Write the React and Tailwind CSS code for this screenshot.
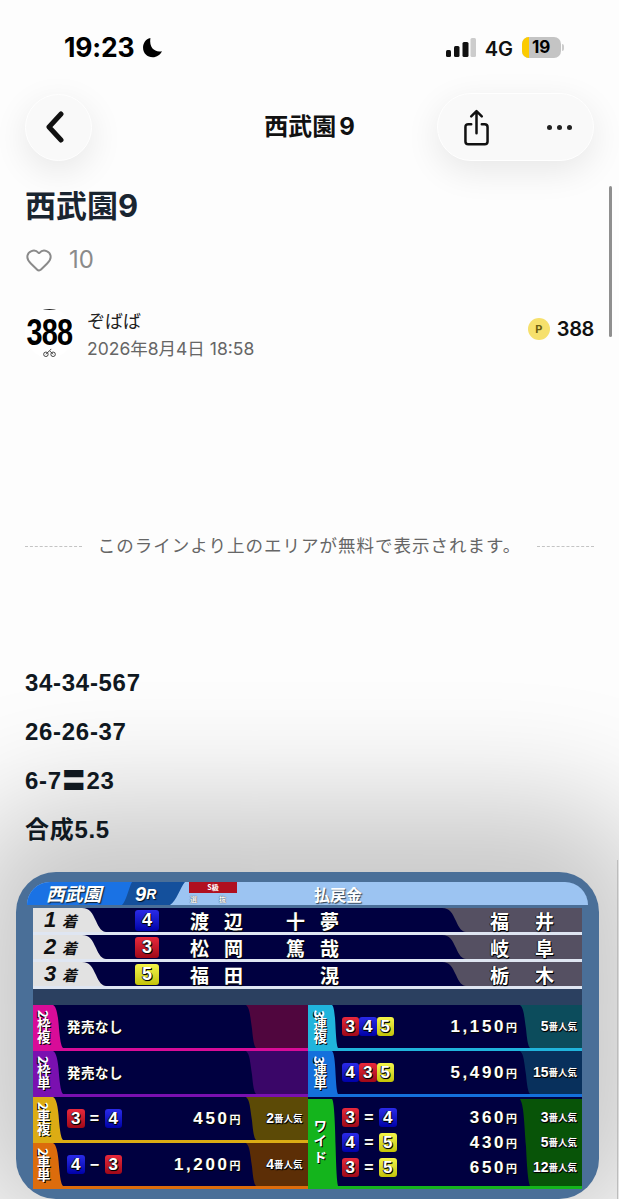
import React from "react";
import { Heart } from "lucide-react";

const INTER = "[font-family:Inter,'Noto_Sans_CJK_JP',sans-serif]";
const ARIAL = "[font-family:'Liberation_Sans','Noto_Sans_CJK_JP',sans-serif]";
const CJK = "[font-family:'Noto_Sans_CJK_JP',sans-serif]";
const OUT = "[text-shadow:1px_1px_0_#000,-1px_0_0_#222,0_1px_1px_#000]";

const Curve = ({ fill, w, flip }) => (
  <svg viewBox="0 0 10 100" preserveAspectRatio="none" className="h-full shrink-0" style={{ width: w }}>
    {flip ? (
      <path d="M0 0 C4 8 4 25 6 55 C7 80 8 95 10 100 L10 0 Z" fill={fill} />
    ) : (
      <path d="M0 0 C3 2 5 20 6 55 C7 80 8 95 10 100 L0 100 Z" fill={fill} />
    )}
  </svg>
);

const Wave = ({ fill, flip }) => (
  <svg viewBox="0 0 24 24" preserveAspectRatio="none" className="h-full w-[24px] shrink-0">
    {flip ? (
      <path d="M0 0 C8 0 10 5 14 13 C17 20 20 24 24 24 L24 0 Z" fill={fill} />
    ) : (
      <path d="M0 0 C8 0 10 5 14 13 C17 20 20 24 24 24 L0 24 Z" fill={fill} />
    )}
  </svg>
);

const badgeStyles = {
  3: "bg-gradient-to-b from-[#e8283c] to-[#a00818]",
  4: "bg-gradient-to-b from-[#2a2ae8] to-[#0000a8]",
  5: "bg-gradient-to-b from-[#f4f448] to-[#c4c400]",
};

const Badge = ({ n, big }) => (
  <span
    className={`flex shrink-0 items-center justify-center rounded-[3px] font-bold text-white ${ARIAL} ${OUT} ${badgeStyles[n]} ${
      big ? "h-[21px] w-[24px] text-[18px]" : "h-[19px] w-[17.5px] text-[17px]"
    }`}
  >
    {n}
  </span>
);

const Result = ({ n, badge, chars, pref }) => (
  <div className="flex h-[27px] border-b-[3px] border-[#dfe6f2] bg-[#000040]">
    <div className={`flex w-[49px] items-center bg-[#e2e2e2] pl-[11px] font-bold italic text-[#111] ${ARIAL}`}>
      <span className="w-[18px] text-[22px] leading-none">{n}</span>
      <span className={`text-[15px] leading-none ${CJK}`}>着</span>
    </div>
    <Wave fill="#e2e2e2" />
    <div className="ml-[29px] flex items-center">
      <Badge n={badge} big />
    </div>
    <div className={`ml-[31px] flex flex-1 items-center text-[19px] leading-none font-bold text-white ${CJK} ${OUT}`}>
      <span className="w-[34px]">{chars[0]}</span>
      <span className="w-[62px]">{chars[1]}</span>
      <span className="w-[34px]">{chars[2]}</span>
      <span>{chars[3]}</span>
    </div>
    <Wave fill="#555062" flip />
    <div className={`flex w-[116px] items-center bg-[#555062] pl-[24px] text-[19px] leading-none font-bold text-white ${CJK} ${OUT}`}>
      <span className="w-[45px]">{pref[0]}</span>
      <span>{pref[1]}</span>
    </div>
  </div>
);

const Amount = ({ v }) => (
  <div className="flex h-[25px] items-center">
    <span className={`ml-auto flex items-baseline font-bold tracking-[2.6px] text-white ${ARIAL} ${OUT}`}>
      <span className="text-[17px]">{v}</span>
      <span className={`text-[11px] tracking-normal ${CJK}`}>円</span>
    </span>
  </div>
);

const Pop = ({ v }) => (
  <div className={`flex h-[25px] items-center justify-end font-bold text-white ${ARIAL} ${OUT}`}>
    <span className="text-[14px]">{v}</span>
    <span className={`text-[9.5px] ${CJK}`}>番人気</span>
  </div>
);

const Eq = ({ c = "=" }) => (
  <span className={`w-[20px] text-center text-[16px] font-bold text-white ${ARIAL} ${OUT}`}>{c}</span>
);

const Bet = ({ color, tint, label, left, amounts, pops, grow, right, track = "tracking-[-0.5px]" }) => (
  <div
    className={`flex ${grow ? "h-[92px] pt-[2px]" : "h-[46px]"} border-b-[3px] bg-[#000040]`}
    style={{ borderColor: color }}
  >
    <div
      className={`flex ${right ? "w-[24px]" : "w-[20px]"} shrink-0 items-center justify-center ${track} text-[13.5px] leading-none font-bold text-white [writing-mode:vertical-rl] ${CJK} [text-shadow:1px_1px_0_#000]`}
      style={{ background: color }}
    >
      {label}
    </div>
    <Curve fill={color} w={right ? "6px" : "10px"} />
    <div className="flex min-w-0 flex-1 flex-col justify-center pl-[4px]">{left}</div>
    <div className={`flex shrink-0 flex-col justify-center ${right ? "w-[118px] pr-[3px]" : "w-[112px] pr-[5px]"}`}>{amounts}</div>
    <Curve fill={tint} w="10px" flip />
    <div className="flex w-[52px] shrink-0 flex-col justify-center pr-[5px]" style={{ background: tint }}>
      {pops}
    </div>
  </div>
);

const Pair = ({ a, b, c }) => (
  <div className="flex h-[25px] items-center">
    <Badge n={a} />
    <Eq c={c} />
    <Badge n={b} />
  </div>
);

const Trio = ({ a, b, c }) => (
  <div className="flex h-[25px] items-center">
    <Badge n={a} />
    <Badge n={b} />
    <Badge n={c} />
  </div>
);

const None = () => (
  <span className={`text-[13.5px] font-bold tracking-[0.5px] text-white ${CJK} ${OUT}`}>発売なし</span>
);

const Board = () => (
  <div className="ml-[16px] h-[327px] w-[583px] overflow-hidden rounded-[40px] bg-[#4a6f98] pt-[10px] shadow-[0_-20px_120px_50px_rgba(0,0,0,0.21)]">
    <div className="mx-[11px] flex h-[23px] items-stretch overflow-hidden rounded-tl-[24px] rounded-tr-[24px] bg-[#9cc4f2]">
      <div className={`flex w-[95px] items-center bg-[#1a72e4] pl-[19px] text-[18.5px] leading-none font-bold text-white italic ${CJK} [text-shadow:1px_1px_1px_#123]`}>
        西武園
      </div>
      <svg viewBox="0 0 10 23" preserveAspectRatio="none" className="h-full w-[10px] shrink-0">
        <rect width="10" height="23" fill="#14509c" />
        <path d="M0 23 C4 20 7 5 10 0 L0 0 Z" fill="#1a72e4" />
      </svg>
      <div className={`flex w-[38px] items-center bg-[#14509c] pl-[3px] leading-none font-bold text-white italic ${ARIAL} [text-shadow:1px_1px_1px_#012]`}>
        <span className="text-[20px]">9</span>
        <span className="text-[14px]">R</span>
      </div>
      <svg viewBox="0 0 10 23" preserveAspectRatio="none" className="h-full w-[15px] shrink-0">
        <path d="M0 23 C4 20 7 5 10 0 L0 0 Z" fill="#14509c" />
      </svg>
      <div className="ml-[4px] flex w-[48px] flex-col">
        <div className={`flex h-[11px] items-center justify-center bg-[#b01020] text-[7px] leading-none font-bold text-white ${CJK}`}>S級</div>
        <div className={`flex justify-between px-[1px] text-[7px] leading-[12px] font-bold text-white ${CJK} [text-shadow:0_0_1px_#000]`}>
          <span>選</span>
          <span className="mr-[10px]">抜</span>
        </div>
      </div>
      <div className={`ml-[77px] flex items-center text-[16px] leading-none font-bold text-white ${CJK} [text-shadow:1px_1px_1px_#345]`}>払戻金</div>
    </div>

    <div className="mx-[17px] mt-[3px] bg-[#2b4060]">
      <Result n="1" badge={4} chars={["渡", "辺", "十", "夢"]} pref={["福", "井"]} />
      <Result n="2" badge={3} chars={["松", "岡", "篤", "哉"]} pref={["岐", "阜"]} />
      <Result n="3" badge={5} chars={["福", "田", "", "滉"]} pref={["栃", "木"]} />
      <div className="h-[16px]" />
      <div className="grid grid-cols-2">
        <div className="flex flex-col">
          <Bet color="#d80c98" tint="#50063e" label="2枠複" left={<None />} amounts={null} pops={null} />
          <Bet color="#7a10b0" tint="#3a0668" label="2枠単" left={<None />} amounts={null} pops={null} />
          <Bet color="#dcac14" tint="#5c4a06" label="2車複" left={<Pair a={3} b={4} />} amounts={<Amount v="450" />} pops={<Pop v="2" />} />
          <Bet color="#dc6c0c" tint="#5c2e06" label="2車単" left={<Pair a={4} b={3} c="−" />} amounts={<Amount v="1,200" />} pops={<Pop v="4" />} />
        </div>
        <div className="flex flex-col">
          <Bet right color="#20b4dc" tint="#0c4c5c" label="3連複" left={<Trio a={3} b={4} c={5} />} amounts={<Amount v="1,150" />} pops={<Pop v="5" />} />
          <Bet right color="#1470dc" tint="#08305c" label="3連単" left={<Trio a={4} b={3} c={5} />} amounts={<Amount v="5,490" />} pops={<Pop v="15" />} />
          <Bet
            right
            grow
            track="tracking-[2px]"
            color="#14b41c"
            tint="#085408"
            label="ワイド"
            left={
              <>
                <Pair a={3} b={4} />
                <Pair a={4} b={5} />
                <Pair a={3} b={5} />
              </>
            }
            amounts={
              <>
                <Amount v="360" />
                <Amount v="430" />
                <Amount v="650" />
              </>
            }
            pops={
              <>
                <Pop v="3" />
                <Pop v="5" />
                <Pop v="12" />
              </>
            }
          />
        </div>
      </div>
    </div>
  </div>
);

export default function App() {
  return (
    <div className={`relative h-[1199px] w-[619px] overflow-hidden bg-[#fdfdfd] ${INTER}`}>
      {/* status bar */}
      <div className="flex h-[93px] items-start justify-between pt-[37px] pl-[64px] pr-[55px]">
        <div className="flex h-[21px] items-center gap-[8px] text-black">
          <span className="text-[26.5px] font-bold tracking-[-0.2px]">19:23</span>
          <svg viewBox="0 0 20 20" className="h-[21px] w-[21px]">
            <path d="M8 1 C3.5 2 1 6 1 10.2 C1 15.5 5 19.2 10.2 19.2 C14 19.2 17.5 17 19 13.5 C13 15 6.5 11 8 1 Z" fill="#000" />
          </svg>
        </div>
        <div className="flex h-[21px] items-center">
          <svg viewBox="0 0 30 19" className="h-[19px] w-[30px]">
            <rect x="0" y="12" width="5" height="7" rx="1.5" fill="#111" />
            <rect x="8" y="8" width="5.5" height="11" rx="1.5" fill="#111" />
            <rect x="16.5" y="4" width="6" height="15" rx="1.5" fill="#111" />
            <rect x="24.5" y="0" width="5.5" height="19" rx="1.5" fill="#ccc" />
          </svg>
          <span className="mt-[2px] ml-[9px] text-[20px] font-semibold text-[#111]">4G</span>
          <div className="ml-[9px] flex h-[21px] w-[39px] items-center overflow-hidden rounded-[7px] bg-[#c4c4c4]">
            <div className="h-full w-[7px] bg-[#fccb00]" />
            <span className="ml-[3px] text-[17px] font-bold text-black">19</span>
          </div>
          <div className="ml-[1px] h-[7px] w-[2px] rounded-r-sm bg-[#ccc]" />
        </div>
      </div>

      {/* nav */}
      <div className="mx-[25px] grid h-[68px] grid-cols-[1fr_auto_1fr] items-center">
        <div className="flex h-[67px] w-[67px] items-center justify-center rounded-full border border-white bg-[#f9f9f9] shadow-[0_10px_35px_rgba(0,0,0,0.09)]">
          <svg viewBox="0 0 24 32" className="mr-[8px] h-[32px] w-[24px]" fill="none" stroke="#111" strokeWidth="5" strokeLinecap="round" strokeLinejoin="round">
            <path d="M18 3 L6 16 L18 29" />
          </svg>
        </div>
        <div className="text-[24px] font-bold text-[#111]">
          西武園<span className="ml-[3px]">9</span>
        </div>
        <div className="flex h-[68px] w-[157px] items-center justify-self-end rounded-full border border-white bg-[#f9f9f9] pl-[26px] shadow-[0_10px_35px_rgba(0,0,0,0.09)]">
          <svg viewBox="0 0 26 38" className="h-[37px] w-[25px]" fill="none" stroke="#111" strokeWidth="2.6" strokeLinecap="round" strokeLinejoin="round">
            <path d="M7.5 15.5 H4.5 Q1.5 15.5 1.5 18.5 V33.5 Q1.5 36.5 4.5 36.5 H21.5 Q24.5 36.5 24.5 33.5 V18.5 Q24.5 15.5 21.5 15.5 H18.5" />
            <path d="M13 25 V2 M7.5 7.5 L13 2 L18.5 7.5" />
          </svg>
          <div className="ml-[58px] flex gap-[5px]">
            <span className="h-[5px] w-[5px] rounded-full bg-[#222]" />
            <span className="h-[5px] w-[5px] rounded-full bg-[#222]" />
            <span className="h-[5px] w-[5px] rounded-full bg-[#222]" />
          </div>
        </div>
      </div>

      {/* article head */}
      <div className="px-[25px]">
        <h1 className="mt-[27px] h-[36px] text-[31px] leading-[36px] font-bold text-[#1a2530]">西武園9</h1>
        <div className="mt-[24px] flex h-[24px] items-center">
          <Heart size={28} strokeWidth={1.7} className="text-[#8a8a8a]" />
          <span className="ml-[16px] text-[24px] text-[#8a8a8a]">10</span>
        </div>
        <div className="mt-[37px] flex h-[49px]">
          <div className="flex h-[49px] w-[49px] shrink-0 flex-col items-center overflow-hidden rounded-full bg-white">
            <span className="h-[1px] w-[14px] bg-[#222]" />
            <span className={`mt-[8px] scale-x-[0.78] text-[37px] leading-[30px] font-bold tracking-[-1px] text-black ${ARIAL}`}>388</span>
            <svg viewBox="0 0 14 10" className="h-[9px] w-[13px]" fill="none" stroke="#333" strokeWidth="1">
              <circle cx="3" cy="7" r="2.5" />
              <circle cx="11" cy="7" r="2.5" />
              <path d="M3 7 L7 3 L11 7 M9 1 L7 3" />
            </svg>
          </div>
          <div className="ml-[13px] flex flex-col">
            <span className="mt-[1px] text-[18px] leading-[24px] text-[#222]">ぞばば</span>
            <span className="mt-[3px] text-[17.5px] leading-[24px] text-[#666]">2026年8月4日 18:58</span>
          </div>
          <div className="ml-auto flex h-[40px] items-center">
            <span className="flex h-[22px] w-[22px] items-center justify-center rounded-full bg-[#f6e06c] text-[11px] font-bold text-[#6b5d10]">P</span>
            <span className="ml-[7px] text-[20px] font-semibold tracking-[-0.4px] text-[#111]">388</span>
          </div>
        </div>

        {/* free line */}
        <div className="mt-[176px] flex h-[24px] items-center justify-between">
          <span className="w-[57px] border-t border-dashed border-[#c4c4c4]" />
          <span className="text-[17.5px] tracking-[1px] whitespace-nowrap text-[#666]">このラインより上のエリアが無料で表示されます。</span>
          <span className="w-[57px] border-t border-dashed border-[#c4c4c4]" />
        </div>

        {/* body */}
        <div className={`mt-[100px] text-[24px] leading-[49px] font-bold tracking-[0.7px] text-[#10181f] ${ARIAL}`}>
          <p>34-34-567</p>
          <p>26-26-37</p>
          <p>
            6-7<span className="font-normal">〓</span>23
          </p>
          <p>合成5.5</p>
        </div>
      </div>

      <div className="mt-[18px]">
        <Board />
      </div>

      {/* scroll indicator */}
      <div className="absolute top-[186px] left-[609px] h-[151px] w-[3px] rounded-full bg-[#8f8f8f]" />
      <div className="absolute top-[860px] right-[1px] bottom-0 w-px bg-[#bdbdbd]" />
    </div>
  );
}
